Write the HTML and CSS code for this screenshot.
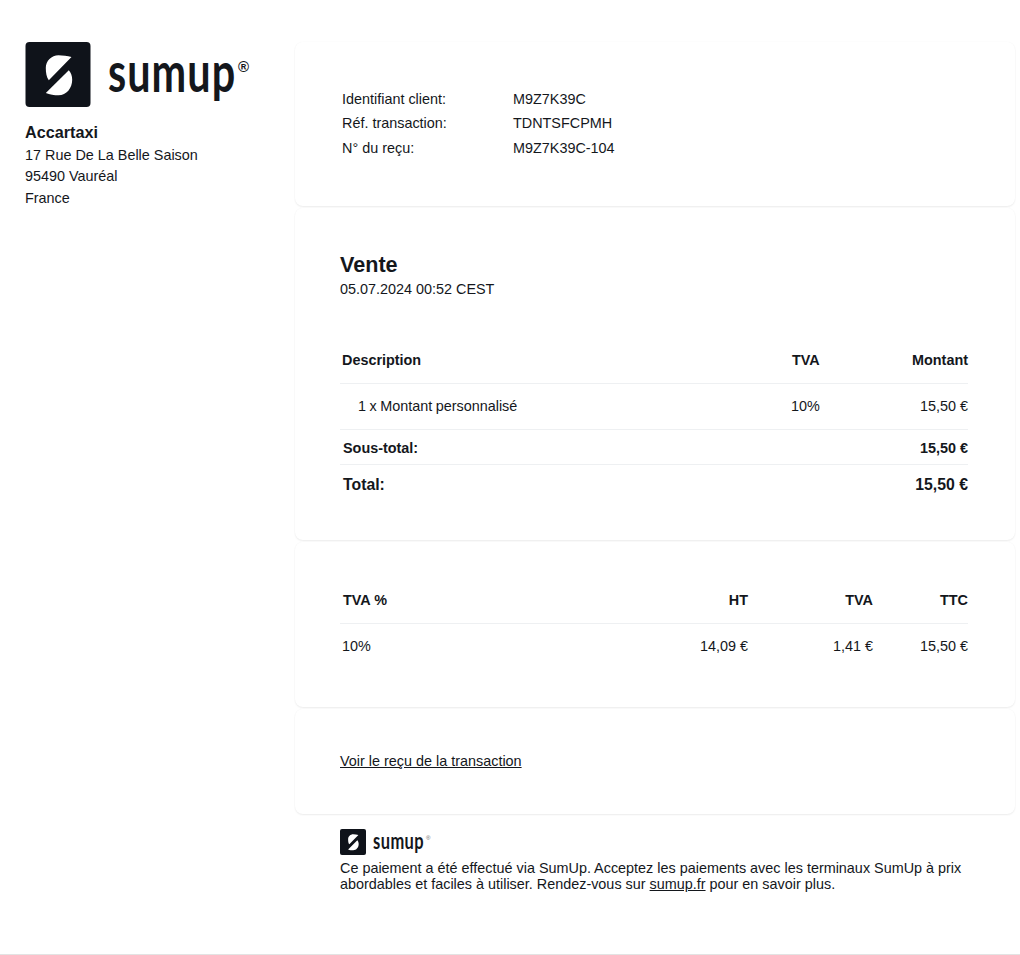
FILE: index.html
```html
<!DOCTYPE html>
<html lang="fr">
<head>
<meta charset="utf-8">
<title>Reçu SumUp</title>
<link rel="stylesheet" href="styles.css">
</head>
<body>
<div class="page">
  <aside class="merchant">
    <div class="logo logo-lg">
      <svg class="logo-mark" viewBox="0 0 65 65" aria-hidden="true"><rect width="65" height="65" rx="4" fill="#0f131a"/><path fill="#fff" d="M46 15C42 14 37 13.3 33 13.3C26 13.3 20.3 19 20.3 26C20.3 31 21 35 23.3 38.3ZM20.3 51C24 52.5 29 53.3 33 53.3C41 53.3 46.7 46 46.7 37.7C46.7 34 45.5 31 43.3 28.3Z"/></svg>
      <span class="logo-word">sumup</span><span class="logo-reg">®</span>
    </div>
    <div class="merchant-name">Accartaxi</div>
    <div class="merchant-line">17 Rue De La Belle Saison</div>
    <div class="merchant-line">95490 Vauréal</div>
    <div class="merchant-line">France</div>
  </aside>
  <main class="receipt">
    <section class="card card-ids">
      <dl class="ids">
        <div class="id-row"><dt>Identifiant client:</dt><dd>M9Z7K39C</dd></div>
        <div class="id-row"><dt>Réf. transaction:</dt><dd>TDNTSFCPMH</dd></div>
        <div class="id-row"><dt>N° du reçu:</dt><dd>M9Z7K39C-104</dd></div>
      </dl>
    </section>
    <section class="card card-sale">
      <h1 class="sale-title">Vente</h1>
      <div class="sale-date">05.07.2024 00:52 CEST</div>
      <div class="items">
        <div class="item-row item-head"><span class="c-desc">Description</span><span class="c-vat">TVA</span><span class="c-amt">Montant</span></div>
        <div class="item-row item-body"><span class="c-desc c-indent">1 x Montant personnalisé</span><span class="c-vat">10%</span><span class="c-amt">15,50 €</span></div>
        <div class="sum-row sub"><span>Sous-total:</span><span>15,50 €</span></div>
        <div class="sum-row total"><span>Total:</span><span>15,50 €</span></div>
      </div>
    </section>
    <section class="card card-tax">
      <div class="tax-row tax-head"><span class="t-rate t-rate-head">TVA %</span><span class="t-ht">HT</span><span class="t-vat">TVA</span><span class="t-ttc">TTC</span></div>
      <div class="tax-row tax-body"><span class="t-rate">10%</span><span class="t-ht">14,09 €</span><span class="t-vat">1,41 €</span><span class="t-ttc">15,50 €</span></div>
    </section>
    <section class="card card-link">
      <a class="link" href="#">Voir le reçu de la transaction</a>
    </section>
    <footer class="foot">
      <div class="logo logo-sm">
        <svg class="logo-mark" viewBox="0 0 65 65" aria-hidden="true"><rect width="65" height="65" rx="5" fill="#0f131a"/><path fill="#fff" d="M46 15C42 14 37 13.3 33 13.3C26 13.3 20.3 19 20.3 26C20.3 31 21 35 23.3 38.3ZM20.3 51C24 52.5 29 53.3 33 53.3C41 53.3 46.7 46 46.7 37.7C46.7 34 45.5 31 43.3 28.3Z"/></svg>
        <span class="logo-word">sumup</span><span class="logo-reg">®</span>
      </div>
      <p class="foot-text">Ce paiement a été effectué via SumUp. Acceptez les paiements avec les terminaux SumUp à prix abordables et faciles à utiliser. Rendez-vous sur <a class="link" href="#">sumup.fr</a> pour en savoir plus.</p>
    </footer>
  </main>
</div>
</body>
</html>
```
FILE: styles.css
```css
* { box-sizing: border-box; }
html, body { margin: 0; padding: 0; }
body {
  background: #fff;
  color: #14171c;
  font-family: "Liberation Sans", Arial, sans-serif;
  font-size: 14.4px;
  height: 955px;
  overflow: hidden;
  border-bottom: 1px solid #e3e3e3;
}
.page { display: flex; padding: 42px 5px 0 25px; }
.merchant { width: 270px; flex: none; }
.logo { display: flex; align-items: center; }
.logo-mark { display: block; flex: none; }
.logo-word {
  display: block;
  flex: none;
  font-family: "Lato", sans-serif;
  font-weight: 700;
  white-space: nowrap;
  transform-origin: left center;
}
.logo-reg { display: block; flex: none; align-self: flex-start; }
.logo-lg { height: 65px; }
.logo-lg .logo-mark { width: 66px; height: 65px; }
.logo-lg .logo-word {
  width: 126px;
  font-size: 47px;
  line-height: 47px;
  margin-left: 17px;
  letter-spacing: 1.2px;
  transform: translateY(-3px) scale(.88, 1.18);
}
.logo-lg .logo-reg { font-size: 15px; line-height: 14px; font-weight: 700; margin: 18px 0 0 4px; }
.logo-sm { height: 26px; }
.logo-sm .logo-mark { width: 26px; height: 26px; }
.logo-sm .logo-word {
  width: 50px;
  font-size: 18.7px;
  line-height: 19px;
  margin-left: 7px;
  letter-spacing: .5px;
  transform: translateY(-1px) scale(.88, 1.2);
}
.logo-sm .logo-reg { font-size: 6px; line-height: 7px; margin: 6px 0 0 3px; color: #666; }
.merchant-name { font-size: 16.2px; font-weight: 700; line-height: 20px; margin-top: 15px; }
.merchant-line { line-height: 21.4px; }
.merchant-name + .merchant-line { margin-top: 3px; }
.receipt { flex: 1; min-width: 0; }
.card {
  background: #fff;
  border-radius: 8px;
  box-shadow: 0 1px 2px rgba(0, 0, 0, .07), 0 0 2px rgba(0, 0, 0, .03);
  margin-bottom: 2px;
  padding: 0 47px 0 45px;
}
.card-ids { height: 164px; padding-top: 45px; padding-left: 47px; }
.ids { margin: 0; }
.id-row { display: flex; line-height: 24.4px; }
.id-row dt { width: 171px; }
.id-row dd { margin: 0; }
.card-sale { height: 332px; padding-top: 44px; }
.sale-title { margin: 0; font-size: 21.6px; font-weight: 700; line-height: 26px; }
.sale-date { line-height: 20px; margin-top: 1px; }
.items { margin-top: 38px; }
.item-row { display: flex; align-items: center; border-bottom: 1px solid #eef0f2; height: 46px; padding-left: 2px; }
.item-head { font-weight: 700; height: 47px; }
.item-body { padding-bottom: 2px; }
.c-desc { flex: 1; }
.c-indent { padding-left: 16px; word-spacing: -.5px; }
.c-vat { width: 28px; }
.item-head .c-vat { width: 27px; }
.item-head .c-amt { width: 149px; }
.c-amt { width: 149px; text-align: right; }
.sum-row { display: flex; justify-content: space-between; align-items: center; padding-left: 3px; font-weight: 700; }
.sub { height: 35px; padding-top: 2px; border-bottom: 1px solid #eef0f2; }
.total { height: 40px; font-size: 15.8px; }
.card-tax { height: 165px; padding-top: 35px; }
.tax-row { display: flex; align-items: center; height: 46px; padding-left: 2px; }
.tax-head { font-weight: 700; height: 47px; border-bottom: 1px solid #eef0f2; }
.tax-body { height: 43px; }
.t-rate { flex: 1; }
.t-rate-head { padding-left: 1px; }
.t-ht { width: 120px; text-align: right; }
.t-vat { width: 125px; text-align: right; }
.t-ttc { width: 95px; text-align: right; }
.card-link { height: 105px; padding-top: 44px; }
.link { color: inherit; text-decoration: underline; line-height: 16px; }
.foot { padding: 13px 47px 0 45px; }
.foot-text { margin: 5px 0 0; line-height: 16px; }
```
